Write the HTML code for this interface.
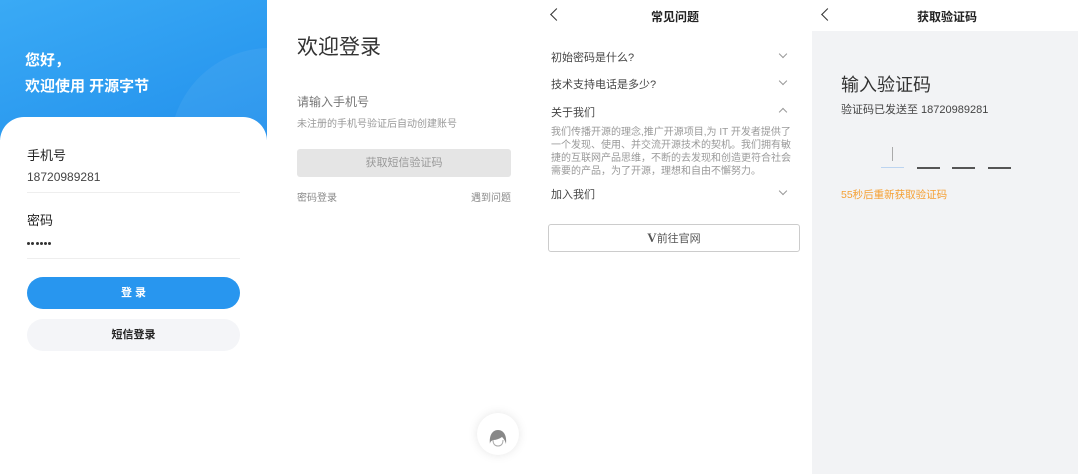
<!DOCTYPE html>
<html><head><meta charset="utf-8"><style>
*{margin:0;padding:0;box-sizing:border-box}
body{width:1080px;height:474px;background:#fff;position:relative;overflow:hidden;font-family:"Liberation Sans","Noto Sans CJK SC",sans-serif;color:#333}
.a{position:absolute;white-space:nowrap}
.chev{position:absolute;width:6px;height:6px;border-right:1.3px solid #999;border-bottom:1.3px solid #999;transform:rotate(45deg)}
.up{transform:rotate(-135deg)}
.back{position:absolute;width:9px;height:9px;border-left:1.3px solid #333;border-bottom:1.3px solid #333;transform:rotate(45deg)}
.dot{display:inline-block;width:3px;height:3px;border-radius:50%;background:#333;margin-right:1.3px}
</style></head><body>
<div class="a" style="left:0;top:0;width:267px;height:140px;background:linear-gradient(160deg,#3aaaf5,#2290ec);overflow:hidden">
 <div class="a" style="left:170px;top:48px;width:200px;height:200px;border-radius:50%;background:rgba(255,255,255,0.06)"></div>
</div>
<div class="a" style="left:0;top:117px;width:267px;height:357px;background:#fff;border-radius:24px 24px 0 0"></div>
<div class="a" style="left:25px;top:49px;color:#fff;font-size:15px;font-weight:bold">您好，</div>
<div class="a" style="left:25px;top:75px;color:#fff;font-size:15px;font-weight:bold">欢迎使用 开源字节</div>
<div class="a" style="left:27px;top:145px;font-size:13px;color:#222">手机号</div>
<div class="a" style="left:27px;top:170px;font-size:12px;color:#444">18720989281</div>
<div class="a" style="left:27px;top:192px;width:213px;height:1px;background:#eee"></div>
<div class="a" style="left:27px;top:210px;font-size:13px;color:#222">密码</div>
<div class="a" style="left:27px;top:241px;line-height:0"><span class="dot"></span><span class="dot"></span><span class="dot"></span><span class="dot"></span><span class="dot"></span><span class="dot"></span></div>
<div class="a" style="left:27px;top:258px;width:213px;height:1px;background:#eee"></div>
<div class="a" style="left:27px;top:277px;width:213px;height:32px;border-radius:16px;background:#2896ef;color:#fff;font-size:11px;font-weight:bold;text-align:center;line-height:32px">登 录</div>
<div class="a" style="left:27px;top:319px;width:213px;height:32px;border-radius:16px;background:#f4f5f8;color:#222;font-size:11px;font-weight:bold;text-align:center;line-height:32px">短信登录</div>
<div class="a" style="left:297px;top:31px;font-size:21px;color:#333">欢迎登录</div>
<div class="a" style="left:297px;top:93px;font-size:12px;color:#777">请输入手机号</div>
<div class="a" style="left:297px;top:115px;font-size:10px;color:#999">未注册的手机号验证后自动创建账号</div>
<div class="a" style="left:297px;top:149px;width:214px;height:28px;border-radius:3px;background:#e5e5e5;color:#999;font-size:11px;text-align:center;line-height:28px">获取短信验证码</div>
<div class="a" style="left:297px;top:189px;font-size:10px;color:#888">密码登录</div>
<div class="a" style="left:471px;top:189px;font-size:10px;color:#888">遇到问题</div>
<div class="a" style="left:477px;top:413px;width:42px;height:42px;border-radius:50%;background:#fff;box-shadow:0 0 10px rgba(0,0,0,0.1)">
 <svg width="42" height="42" viewBox="0 0 42 42"><path d="M13 31c-1-8 2-14 8-14s9 6 8 14c-1-4-3-6-4-7-3 2-6 3-9 3-2 1-3 2-3 4z" fill="#888"/><path d="M16 27c0 4 2 6 5 6s5-2 5-6" fill="none" stroke="#aaa" stroke-width="1"/></svg>
</div>
<div class="back" style="left:552px;top:10px"></div>
<div class="a" style="left:651px;top:8px;font-size:12px;font-weight:bold;color:#222">常见问题</div>
<div class="a" style="left:551px;top:49px;font-size:11px;color:#444">初始密码是什么?</div>
<div class="chev" style="left:780px;top:51px"></div>
<div class="a" style="left:551px;top:76px;font-size:11px;color:#444">技术支持电话是多少?</div>
<div class="chev" style="left:780px;top:78px"></div>
<div class="a" style="left:551px;top:104px;font-size:11px;color:#444">关于我们</div>
<div class="chev up" style="left:780px;top:109px"></div>
<div class="a" style="left:551px;top:126px;width:242px;white-space:normal;font-size:10px;line-height:13px;color:#999">我们传播开源的理念,推广开源项目,为 IT 开发者提供了一个发现、使用、并交流开源技术的契机。我们拥有敏捷的互联网产品思维，不断的去发现和创造更符合社会需要的产品，为了开源，理想和自由不懈努力。</div>
<div class="a" style="left:551px;top:186px;font-size:11px;color:#444">加入我们</div>
<div class="chev" style="left:780px;top:188px"></div>
<div class="a" style="left:548px;top:224px;width:252px;height:28px;border:1px solid #ccc;border-radius:3px;text-align:center;line-height:26px;font-size:11px;color:#555"><b style="font-family:'Liberation Serif',serif;font-size:13px">V</b>前往官网</div>
<div class="back" style="left:823px;top:10px"></div>
<div class="a" style="left:917px;top:8px;font-size:12px;font-weight:bold;color:#222">获取验证码</div>
<div class="a" style="left:812px;top:31px;width:266px;height:443px;background:#f2f3f5"></div>
<div class="a" style="left:841px;top:71px;font-size:18px;color:#333">输入验证码</div>
<div class="a" style="left:841px;top:101px;font-size:11px;color:#444">验证码已发送至 18720989281</div>
<div class="a" style="left:892px;top:147px;width:1px;height:14px;background:#aaa"></div>
<div class="a" style="left:881px;top:167px;width:23px;height:1px;background:#bcd4f0"></div>
<div class="a" style="left:917px;top:167px;width:23px;height:1.5px;background:#555"></div>
<div class="a" style="left:952px;top:167px;width:23px;height:1.5px;background:#555"></div>
<div class="a" style="left:988px;top:167px;width:23px;height:1.5px;background:#555"></div>
<div class="a" style="left:841px;top:187px;font-size:10.5px;color:#f5a033">55秒后重新获取验证码</div>
</body></html>
